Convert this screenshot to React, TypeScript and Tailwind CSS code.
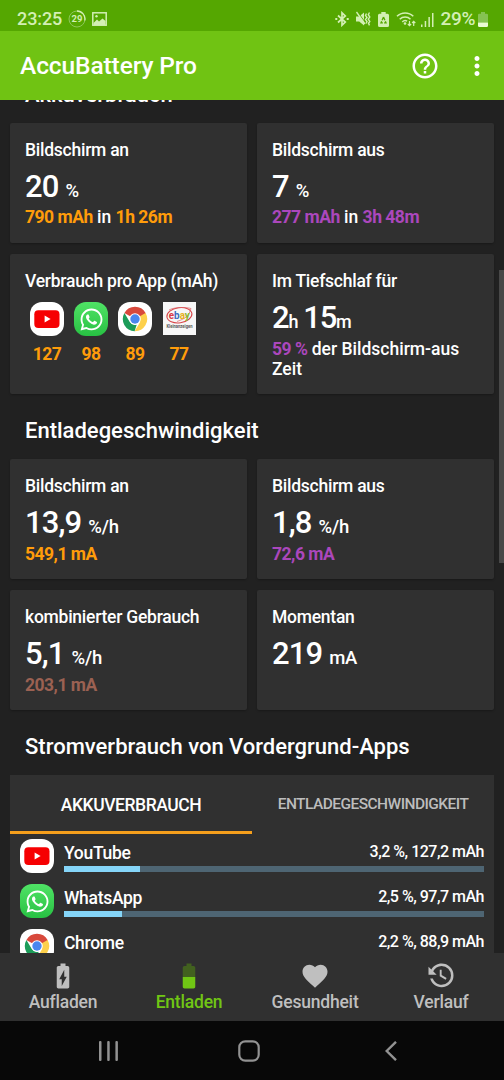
import React from 'react';
import { MdBatteryChargingFull, MdFavorite, MdHelpOutline, MdMoreVert } from 'react-icons/md';
import { FaWhatsapp } from 'react-icons/fa';

interface CardProps {
  title: React.ReactNode;
  children: React.ReactNode;
}

interface AppUsage {
  name: string;
  value: string;
  percent: number;
  icon: React.ReactNode;
}

const YouTubeIcon = () => (
  <svg viewBox="0 0 34 34" className="w-[34px] h-[34px] block">
    <rect width="34" height="34" rx="12" fill="#fff" />
    <rect x="4.3" y="8.3" width="25.2" height="17.6" rx="4" fill="#f60002" />
    <path d="M14.6 13.6v7l6-3.5z" fill="#fff" />
  </svg>
);

const WhatsAppIcon = () => (
  <div className="w-[34px] h-[34px] rounded-[12px] bg-linear-to-b from-[#4fe365] to-[#27c143] flex items-center justify-center">
    <FaWhatsapp className="w-[25px] h-[25px] text-white" />
  </div>
);

const ChromeIcon = () => (
  <svg viewBox="0 0 34 34" className="w-[34px] h-[34px] block">
    <rect width="34" height="34" rx="12" fill="#fff" />
    <path d="M17 17 6.4 10.9A12.2 12.2 0 0 1 27.6 11z" fill="#d8493c" />
    <path d="M17 11h10.6A12.2 12.2 0 0 1 16.6 29.2L22.2 20z" fill="#fdd04b" />
    <path d="M6.4 10.9 11.8 20A6 6 0 0 0 18.7 22.7L16.6 29.2A12.2 12.2 0 0 1 6.4 10.9z" fill="#1c9c59" />
    <path d="M17 11h10.6L17 17z" fill="#d8493c" />
    <circle cx="17" cy="17" r="5.8" fill="#fff" />
    <circle cx="17" cy="17" r="4.7" fill="#4a86ee" />
  </svg>
);

const EbayIcon = () => (
  <svg viewBox="0 0 33 33" className="w-[33px] h-[33px] block">
    <rect width="33" height="33" fill="#f7f7f7" />
    <ellipse cx="16.4" cy="13.2" rx="12.6" ry="7.6" fill="none" stroke="#d8474b" strokeWidth="1.1" transform="rotate(-8 16.4 13.2)" />
    <path d="M6 8c5-3 17-3 22-1.500-2 7-5 10-14 13" fill="none" stroke="#dc6265" strokeWidth="0.7" />
    <text x="5.800" y="17.200" fontSize="11" fontWeight="700" fontFamily="Roboto" textLength="21" lengthAdjust="spacingAndGlyphs">
      <tspan fill="#d93a45">e</tspan>
      <tspan fill="#3b6cc0">b</tspan>
      <tspan fill="#e8b021">a</tspan>
      <tspan fill="#8cb92f">y</tspan>
    </text>
    <text x="3.500" y="26.300" fontSize="4.800" fontWeight="700" fontFamily="Roboto" fill="#5a5a5a" textLength="26" lengthAdjust="spacingAndGlyphs">Kleinanzeigen</text>
  </svg>
);

const HistoryIcon = () => (
  <svg viewBox="0 0 24 24" className="w-[30px] h-[30px]" fill="currentColor">
    <path d="M11 7v5.110l4.710 2.790.79-1.280-4-2.370V7M12.500 2C8.970 2 5.910 3.920 4.270 6.770L2 4.500V11h6.500L5.750 8.250C6.960 5.730 9.500 4 12.500 4a7.500 7.500 0 0 1 0 15c-3.270 0-6.030-2.090-7.060-5h-2.100c1.100 4.030 4.770 7 9.160 7a9.500 9.500 0 0 0 0-19z" />
  </svg>
);

const DischargeIcon = () => (
  <svg viewBox="0 0 24 24" className="w-[30px] h-[30px]">
    <path d="M17 12.800V5.330C17 4.600 16.400 4 15.670 4H14V2h-4v2H8.330C7.600 4 7 4.600 7 5.330v7.470z" fill="#42611f" />
    <path d="M7 12.800v7.870C7 21.400 7.600 22 8.330 22h7.340c.73 0 1.330-.6 1.330-1.330V12.800z" fill="#70c614" />
  </svg>
);

const StatusBar = () => (
  <div className="h-[31px] shrink-0 bg-[#55a701] flex items-center justify-between pt-[7px] pl-[17px] pr-4 text-[#d3efb4]">
    <div className="flex items-center">
      <span className="text-[18px] leading-5 w-[51px] tracking-[-0.1px]">23:25</span>
      <svg viewBox="0 0 18 18" className="w-[18px] h-[18px]">
        <circle cx="9" cy="9" r="8" fill="none" stroke="#8ec75a" strokeWidth="1" />
        <path d="M9 1a8 8 0 0 1 7.800 9.500" fill="none" stroke="#d3efb4" strokeWidth="1.300" />
        <text x="9" y="12.300" fontSize="9.500" fontWeight="700" fontFamily="Roboto" textAnchor="middle" fill="currentColor">29</text>
      </svg>
      <svg viewBox="0 0 15 14" className="w-[15px] h-[14px] ml-[6px]" fill="none">
        <rect x="0.8" y="0.8" width="13.400" height="12.400" stroke="currentColor" strokeWidth="1.500" />
        <path d="M1.500 11 5 7.500l2 2 3.500-3L13.500 9v4h-12z" fill="currentColor" />
        <circle cx="4.500" cy="4.200" r="1.200" fill="currentColor" />
      </svg>
    </div>
    <div className="flex items-center">
      <svg viewBox="0 0 14 16" className="w-[14px] h-4" fill="none" stroke="currentColor" strokeWidth="1.700">
        <path d="M3 4.500 10.300 11 7 14.200V1.800L10.300 5 3 11.500" />
        <path d="M0.300 8h2M11.700 8h2" strokeWidth="2" />
      </svg>
      <svg viewBox="0 0 16 16" className="w-4 h-4 ml-[6px]">
        <path d="M1 5.500h3.200L9 1.500v13l-4.800-4H1z" fill="currentColor" />
        <path d="M2.500 1 10.500 12" stroke="#55a701" strokeWidth="1.200" />
        <path d="M1.500 1 10 13" stroke="currentColor" strokeWidth="1.300" />
        <path d="M11.500 2.500l-1 2 1.500 2-1.500 2 1.500 2-1 2M14.500 1.500l-1.200 2.200L14.800 6l-1.500 2.200 1.500 2.200-1.300 2 1 2" fill="none" stroke="currentColor" strokeWidth="1.400" />
      </svg>
      <svg viewBox="0 0 11 15" className="w-[11px] h-[15px] ml-[7px]">
        <path d="M3.300 0h4.400v1.700H9.500Q11 1.700 11 3.200v10.300q0 1.500-1.500 1.500h-8Q0 15 0 13.500V3.200q0-1.500 1.500-1.500h1.800z" fill="currentColor" />
        <path d="M5.500 5 3 10.800h5z" fill="none" stroke="#55a701" strokeWidth="1.300" strokeDasharray="3.500 1.200" />
      </svg>
      <svg viewBox="0 0 20 16" className="w-5 h-4 ml-[7px]" fill="none" stroke="currentColor" strokeWidth="1.500">
        <path d="M1 5.300a11.500 11.500 0 0 1 16.300 0M3.700 8.200a7.600 7.600 0 0 1 10.800 0M6.300 10.900a4 4 0 0 1 4.800-.8" />
        <circle cx="9" cy="12.500" r="1.300" fill="currentColor" stroke="none" />
        <path d="M13.500 10v4.500M11.900 13l1.600 1.700L15.100 13M17.700 15v-4.500M16.100 12l1.600-1.700 1.600 1.700" strokeWidth="1.200" />
      </svg>
      <svg viewBox="0 0 13 15" className="w-[13px] h-[15px] ml-[5px]" fill="currentColor">
        <path d="M0 12.500h1.500V15H0zM3.700 9h1.500v6H3.700zM7.400 5h1.500v10H7.400zM11 1h1.500v14H11z" />
      </svg>
      <span className="text-[19px] leading-5 tracking-[-0.4px] ml-[7px] mr-[3px]">29%</span>
      <svg viewBox="0 0 10 15" className="w-[10px] h-[15px]">
        <path d="M3 0h4v1.700h1.700Q10 1.700 10 3v7.500H0V3q0-1.300 1.300-1.300H3z" fill="#85c252" />
        <path d="M0 10.500h10v3Q10 15 8.700 15H1.300Q0 15 0 13.500z" fill="#e9fbd3" />
      </svg>
    </div>
  </div>
);

const Card: React.FC<CardProps> = ({ title, children }) => (
  <div className="bg-[#303030] rounded-[2px] shadow-[0_1px_2px_rgba(0,0,0,0.25)] pt-[17px] pl-[15px] pr-4">
    <div className="text-[17.500px] leading-5 tracking-[-0.25px]">{title}</div>
    {children}
  </div>
);

const Big = ({ value, unit }: { value: string; unit: string }) => (
  <div className="mt-[11px] h-8 leading-8 text-[31px] tracking-[-0.9px]">
    {value}
    <span className="text-[18.500px] tracking-[-0.2px] ml-[7px]">{unit}</span>
  </div>
);

const SectionTitle = ({ children }: { children: React.ReactNode }) => (
  <h2 className="mt-[23px] h-[42px] pl-[15px] text-[22px] leading-7">{children}</h2>
);

const Orange = ({ children }: { children: React.ReactNode }) => (
  <span className="text-[#ff9c0a] font-bold tracking-[-0.5px]">{children}</span>
);

const Purple = ({ children }: { children: React.ReactNode }) => (
  <span className="text-[#ab47bc] font-bold tracking-[-0.5px]">{children}</span>
);

const topApps = [
  { icon: <YouTubeIcon />, value: '127' },
  { icon: <WhatsAppIcon />, value: '98' },
  { icon: <ChromeIcon />, value: '89' },
  { icon: <EbayIcon />, value: '77' },
];

const usage: AppUsage[] = [
  { name: 'YouTube', value: '3,2 %, 127,2 mAh', percent: 18, icon: <YouTubeIcon /> },
  { name: 'WhatsApp', value: '2,5 %, 97,7 mAh', percent: 13.8, icon: <WhatsAppIcon /> },
  { name: 'Chrome', value: '2,2 %, 88,9 mAh', percent: 12.5, icon: <ChromeIcon /> },
];

const tabs = [
  { label: 'Aufladen', icon: <MdBatteryChargingFull className="w-[30px] h-[30px]" />, color: 'text-[#bfbfbf]' },
  { label: 'Entladen', icon: <DischargeIcon />, color: 'text-[#70c614]' },
  { label: 'Gesundheit', icon: <MdFavorite className="w-[30px] h-[30px]" />, color: 'text-[#bfbfbf]' },
  { label: 'Verlauf', icon: <HistoryIcon />, color: 'text-[#bfbfbf]' },
];

const App = () => {
  return (
    <div className="w-[504px] h-[1080px] overflow-hidden flex flex-col bg-[#212121] text-white font-medium font-[Roboto,sans-serif]">
      <StatusBar />

      <header className="h-[69px] shrink-0 bg-[#70c313] flex items-center pl-5 pr-[12px]">
        <h1 className="text-[24.500px] leading-8 flex-1 pt-[1px] tracking-[-0.1px]">AccuBattery Pro</h1>
        <MdHelpOutline className="w-[30px] h-[30px]" />
        <MdMoreVert className="w-[30px] h-[30px] ml-[22px]" />
      </header>

      <main className="relative flex-1 min-h-0 overflow-hidden px-[10px]">
        <h2 className="-mt-[19px] h-[42px] pl-[15px] text-[22px] leading-7">Akkuverbrauch</h2>
        <div className="grid grid-cols-2 gap-x-[10px] gap-y-[11px] grid-rows-[120px_140px]">
          <Card title="Bildschirm an">
            <Big value="20" unit="%" />
            <p className="mt-[4px] text-[17.500px] leading-5"><Orange>790 mAh</Orange> in <Orange>1h 26m</Orange></p>
          </Card>
          <Card title="Bildschirm aus">
            <Big value="7" unit="%" />
            <p className="mt-[4px] text-[17.500px] leading-5"><Purple>277 mAh</Purple> in <Purple>3h 48m</Purple></p>
          </Card>
          <Card title="Verbrauch pro App (mAh)">
            <div className="flex gap-[10px] mt-[11px] ml-[5px]">
              {topApps.map((app) => (
                <div key={app.value} className="w-[34px] flex flex-col items-center">
                  <div className="h-[34px]">{app.icon}</div>
                  <span className="mt-[8px] text-[17.500px] leading-5"><Orange>{app.value}</Orange></span>
                </div>
              ))}
            </div>
          </Card>
          <Card title="Im Tiefschlaf für">
            <div className="mt-[11px] h-8 leading-8 text-[31px] tracking-[-1.200px]">
              2<span className="text-[18px] mr-[6px]">h</span>15<span className="text-[18px]">m</span>
            </div>
            <p className="mt-[5px] text-[17.500px] leading-5"><Purple>59 %</Purple> der Bildschirm-aus<br />Zeit</p>
          </Card>
        </div>

        <SectionTitle>Entladegeschwindigkeit</SectionTitle>
        <div className="grid grid-cols-2 gap-x-[10px] gap-y-[11px] grid-rows-[120px_120px]">
          <Card title="Bildschirm an">
            <Big value="13,9" unit="%/h" />
            <p className="mt-[5px] text-[17.500px] leading-5"><Orange>549,1 mA</Orange></p>
          </Card>
          <Card title="Bildschirm aus">
            <Big value="1,8" unit="%/h" />
            <p className="mt-[5px] text-[17.500px] leading-5"><Purple>72,6 mA</Purple></p>
          </Card>
          <Card title="kombinierter Gebrauch">
            <Big value="5,1" unit="%/h" />
            <p className="mt-[5px] text-[17.500px] leading-5 font-bold tracking-[-0.5px] text-[#9b6152]">203,1 mA</p>
          </Card>
          <Card title="Momentan">
            <Big value="219" unit="mA" />
          </Card>
        </div>

        <SectionTitle>Stromverbrauch von Vordergrund-Apps</SectionTitle>
        <section className="bg-[#303030] h-[220px]">
          <div className="grid grid-cols-2 h-[59px]">
            <button className="border-b-[3px] border-[#f59f1c] pt-[4px] text-[17.500px] tracking-[-0.45px]">AKKUVERBRAUCH</button>
            <button className="text-[15.500px] text-[#bdbdbd] tracking-[-0.55px] pt-[1px]">ENTLADEGESCHWINDIGKEIT</button>
          </div>
          <div className="pt-[5px] px-[10px]">
            {usage.map((app) => (
              <div key={app.name} className="flex gap-[10px] h-[45px]">
                {app.icon}
                <div className="flex-1">
                  <div className="flex justify-between h-[27px]">
                    <span className="text-[17.500px] leading-7 tracking-[-0.3px]">{app.name}</span>
                    <span className="text-[16px] leading-[25px] tracking-[-0.5px]">{app.value}</span>
                  </div>
                  <div className="h-[6px] bg-[#4e6573]">
                    <div className="h-full bg-[#85d5f8]" style={{ width: `${app.percent}%` }} />
                  </div>
                </div>
              </div>
            ))}
          </div>
        </section>

        {/* Scroll position indicator */}
        <div className="absolute right-0 top-[170px] w-[5px] h-[293px] bg-[#484848]" />
      </main>

      <nav className="h-[68px] shrink-0 bg-[#303030] grid grid-cols-4 pt-[8px]">
        {tabs.map((tab) => (
          <div key={tab.label} className={`flex flex-col items-center ${tab.color}`}>
            {tab.icon}
            <span className="text-[17.500px] leading-5 mt-[1px] tracking-[-0.2px]">{tab.label}</span>
          </div>
        ))}
      </nav>

      <div className="h-[59px] shrink-0 bg-[#080808] flex items-center text-[#929292]">
        <svg viewBox="0 0 20 20" className="w-5 h-5 ml-[99px]" fill="currentColor">
          <rect width="2.500" height="20" rx="1" />
          <rect x="8.200" width="2.500" height="20" rx="1" />
          <rect x="16.400" width="2.500" height="20" rx="1" />
        </svg>
        <svg viewBox="0 0 22 22" className="w-[22px] h-[22px] ml-[119px]" fill="none" stroke="currentColor" strokeWidth="2.200">
          <rect x="1.300" y="1.300" width="19.400" height="19.400" rx="6" />
        </svg>
        <svg viewBox="0 0 12 20" className="w-3 h-5 ml-[125px]" fill="none" stroke="currentColor" strokeWidth="2.400">
          <path d="M11 .8 1.700 10 11 19.200" />
        </svg>
      </div>
    </div>
  );
};

export default App;
